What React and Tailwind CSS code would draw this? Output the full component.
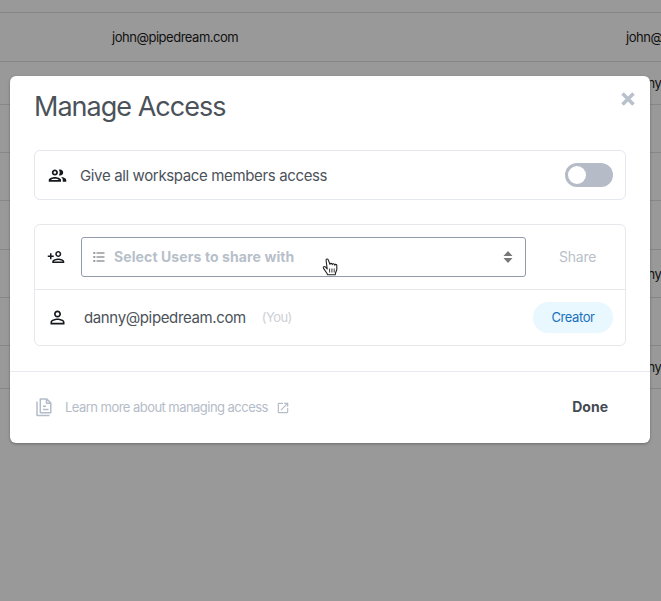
import { useState } from 'react';
import {
  MdOutlineGroup,
  MdOutlinePersonAdd,
  MdPersonOutline,
  MdOpenInNew,
} from 'react-icons/md';

// Rows of the table behind the modal
const rows = [
  { height: 'h-[13px]' },
  { height: 'h-[49px]', email: 'john@pipedream.com', owner: 'john@pipedream.com' },
  { height: 'h-[43px]', owner: 'danny@pipedream.com' },
  { height: 'h-[48px]' },
  { height: 'h-[48px]' },
  { height: 'h-[49px]' },
  { height: 'h-[48px]', owner: 'danny@pipedream.com' },
  { height: 'h-[48px]' },
  { height: 'h-[43px]', owner: 'danny@pipedream.com' },
];

function BackgroundTable() {
  return (
    <div className="w-full text-[13px] tracking-[-0.48px] text-[#111]">
      {rows.map((row, index) => (
        <div key={index} className={`${row.height} flex items-center border-b border-[#858789] whitespace-nowrap`}>
          <span className="ml-[112px] w-[514px] shrink-0 pt-[2px]">{row.email}</span>
          <span className="shrink-0 pt-[2px]">{row.owner}</span>
        </div>
      ))}
    </div>
  );
}

function CloseIcon() {
  return (
    <svg viewBox="0 0 14 14" className="size-[14px]" fill="none" stroke="currentColor" strokeWidth="3.6">
      <path d="M1.5 1.5l11 11M12.5 1.5l-11 11" />
    </svg>
  );
}

function ListIcon() {
  return (
    <svg viewBox="0 0 12 12" className="size-3" fill="none" stroke="#969a9f" strokeWidth="1.3">
      <path d="M3.5 2h8M3.5 6h8M3.5 10h8" />
      <path d="M.3 2h2M.3 6h2M.3 10h2" strokeWidth="2" />
    </svg>
  );
}

function SortIcon() {
  return (
    <svg viewBox="0 0 10 12" className="ml-auto h-3 w-[10px]" fill="#777">
      <path d="M5 0l4.5 5h-9zM5 12L.5 7h9z" />
    </svg>
  );
}

function DocsIcon() {
  return (
    <svg viewBox="0 0 16 19" className="h-[19px] w-4" fill="none" stroke="currentColor" strokeWidth="1.5" strokeLinejoin="round">
      <path d="M4.3 1h6.5l4 4v9.8H4.3zM10.5 1v4.3h4.3M7 8.3h3M7 11.4h5.5M1 3.5v14h12.5" />
    </svg>
  );
}

function HandCursor() {
  return (
    <svg viewBox="0 0 16 18" className="absolute top-[20px] left-[240px] h-[18px] w-4" fill="#fff" stroke="#222" strokeWidth="1.1" strokeLinejoin="round">
      <path d="M5.2 11L3.6 9.1C2.4 8 .8 8.8 1.4 10.1L4.7 15l1 1.8h7.5l.4-2.1 1.2-2.9V7.6c0-1.5-1.9-1.6-2.1-.3 0-1.9-2.1-2-2.4-.6-.1-1.7-2.1-1.8-2.4-.4L6.3 1.9C5.8.4 3.7.9 4.1 2.5z" />
      <path d="M7.6 10.5v4M9.9 10.5v4M12.2 10.5v4" fill="none" strokeWidth="0.9" />
    </svg>
  );
}

function App() {
  const [allMembers, setAllMembers] = useState(false);

  return (
    <div className="relative h-[601px] w-[661px] overflow-hidden bg-[#999] font-['Inter',sans-serif]">
      <BackgroundTable />

      <div className="absolute top-[76px] left-[10px] flex h-[367px] w-[640px] flex-col rounded-[6px] bg-white text-[#4b525a] shadow-[0_1px_3px_rgba(0,0,0,0.3)]">
        <div className="flex h-[74px] items-start justify-between pr-[15px] pl-6">
          <h2 className="mt-[13px] text-[27px] leading-9 tracking-[-0.98px]">Manage Access</h2>
          <button type="button" className="mt-4 text-[#b9c1cc]">
            <CloseIcon />
          </button>
        </div>

        {/* Workspace access */}
        <div className="mx-6 flex h-[50px] w-[592px] items-center rounded-[6px] border border-[#e4e7ee] pr-3 pl-3">
          <MdOutlineGroup className="size-[21px] text-[#16181b]" />
          <span className="ml-[12px] pt-0.5 text-[15px] tracking-[-0.36px]">Give all workspace members access</span>
          <button
            type="button"
            onClick={() => setAllMembers(!allMembers)}
            className={`ml-auto flex h-6 w-12 items-center rounded-full bg-[#b5bcc8] px-[3px] ${allMembers ? 'justify-end' : ''}`}
          >
            <span className="size-[18px] rounded-full bg-white" />
          </button>
        </div>

        {/* Users */}
        <div className="mx-6 mt-6 h-[122px] w-[592px] rounded-[6px] border border-[#e6e8ec]">
          <div className="flex h-[65px] items-center border-b border-[#e6e8ec] pl-3">
            <MdOutlinePersonAdd className="size-[18px] text-[#16181b]" />
            <div className="relative ml-4 flex h-10 w-[445px] items-center rounded-[3px] border border-[#929baa] pr-3 pl-[11px]">
              <ListIcon />
              <span className="ml-[9px] pb-0.5 text-[14px] font-bold tracking-[0.1px] text-[#b7bfca]">Select Users to share with</span>
              <SortIcon />
              <HandCursor />
            </div>
            <button type="button" className="ml-[33px] pb-px text-[14px] tracking-[-0.2px] text-[#b9bfc9]">Share</button>
          </div>
          <div className="flex h-[55px] items-center pr-3 pl-3">
            <MdPersonOutline className="size-[21px] text-[#16181b]" />
            <span className="ml-4 pt-px text-[15px] tracking-[-0.37px]">danny@pipedream.com</span>
            <span className="ml-4 pt-px text-[13px] tracking-[-0.6px] text-[#cdd0d5]">(You)</span>
            <span className="ml-auto flex h-[31px] w-20 items-center justify-center rounded-full bg-[#e9f7ff] text-[13px] tracking-[-0.4px] text-[#1971bd]">Creator</span>
          </div>
        </div>

        <div className="mt-[25px] flex h-[72px] items-center border-t border-[#e6e9f0] pr-[42px] pl-[26px] text-[#b4bcc8]">
          <DocsIcon />
          <span className="ml-[13px] text-[13px] tracking-[-0.54px]">Learn more about managing access</span>
          <MdOpenInNew className="ml-2 size-[14px]" />
          <button type="button" className="ml-auto pb-0.5 text-[14px] font-bold text-[#454b53]">Done</button>
        </div>
      </div>
    </div>
  );
}

export default App;
